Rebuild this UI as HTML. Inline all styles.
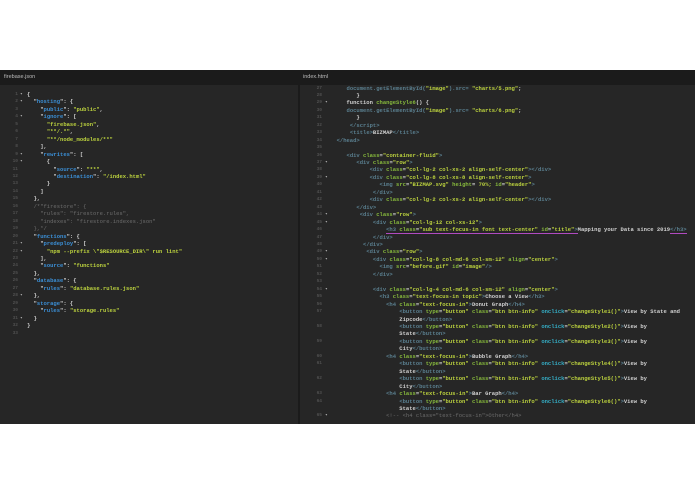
<!DOCTYPE html>
<html><head><meta charset="utf-8"><style>
html,body{margin:0;padding:0;background:#fff;width:695px;height:494px;overflow:hidden;position:relative;font-family:"Liberation Mono",monospace}
#ed{position:absolute;left:0;top:70px;width:695px;height:354px;background:#262626}
.hd{position:absolute;top:0;height:15px;background:#1b1b1b;color:#bbb;font:5.5px "Liberation Sans",sans-serif;line-height:15px;padding-left:4px;box-sizing:border-box}
.sep{position:absolute;left:298px;top:0;width:2px;height:354px;background:#1b1b1b}
pre{position:absolute;margin:0;font-family:"Liberation Mono",monospace;font-size:5.5px;line-height:7.45px;white-space:pre;color:#d0d0d0;font-weight:bold}
.n{position:absolute;margin:0;font-family:"Liberation Mono",monospace;font-size:4.5px;line-height:7.45px;color:#505050;text-align:right;white-space:pre}
.k{color:#3b8fd6}.s{color:#bcd23e}.g{color:#6c6c6c;font-weight:normal}
.t{color:#5a7f8f}.a{color:#86b83c}.c{color:#35aec6}.u{border-bottom:1px solid #b04ac0}
</style></head><body>
<div id="ed">
<div class="hd" style="left:0;width:298px">firebase.json</div>
<div class="hd" style="left:300px;width:395px;padding-left:3px">index.html</div>
<div class="sep"></div>
<pre class="n" style="left:2px;top:21px;width:16px">1
2
3
4
5
6
7
8
9
10
11
12
13
14
15
16
17
18
19
20
21
22
23
24
25
26
27
28
29
30
31
32
33</pre>
<pre class="n" style="left:20px;top:21px;color:#aaa">▾
▾

▾




▾
▾










▾
▾





▾


▾</pre>
<pre style="left:27px;top:21px">{
  "<span class="k">hosting</span>": {
    "<span class="k">public</span>": <span class="s">"public"</span>,
    "<span class="k">ignore</span>": [
      <span class="s">"firebase.json"</span>,
      <span class="s">"**/.*"</span>,
      <span class="s">"**/node_modules/**"</span>
    ],
    "<span class="k">rewrites</span>": [
      {
        "<span class="k">source</span>": <span class="s">"**"</span>,
        "<span class="k">destination</span>": <span class="s">"/index.html"</span>
      }
    ]
  },
<span class="g">  /*"firestore": {
    "rules": "firestore.rules",
    "indexes": "firestore.indexes.json"
  },*/</span>
  "<span class="k">functions</span>": {
    "<span class="k">predeploy</span>": [
      <span class="s">"npm --prefix \"$RESOURCE_DIR\" run lint"</span>
    ],
    "<span class="k">source</span>": <span class="s">"functions"</span>
  },
  "<span class="k">database</span>": {
    "<span class="k">rules</span>": <span class="s">"database.rules.json"</span>
  },
  "<span class="k">storage</span>": {
    "<span class="k">rules</span>": <span class="s">"storage.rules"</span>
  }
}
</pre>
<pre class="n" style="left:304px;top:14.5px;width:18px">27
28
29
30
31
32
33
34
35
36
37
38
39
40
41
42
43
44
45
46
47
48
49
50
51
52
53
54
55
56
57

58

59

60
61

62

63
64

65</pre>
<pre class="n" style="left:325px;top:14.5px;color:#aaa">


▾







▾

▾




▾
▾



▾
▾



▾
















▾</pre>
<pre style="left:330px;top:14.5px">     <span class="t">document.getElementById(</span><span class="s">"image"</span><span class="t">).src= </span><span class="s">"charts/5.png"</span>;
        }
     function <span class="a">changeStyle6</span>() {
     <span class="t">document.getElementById(</span><span class="s">"image"</span><span class="t">).src= </span><span class="s">"charts/6.png"</span>;
        }
      <span class="t">&lt;/script&gt;</span>
      <span class="t">&lt;title&gt;</span>BIZMAP<span class="t">&lt;/title&gt;</span>
  <span class="t">&lt;/head&gt;</span>

     <span class="t">&lt;div</span> <span class="a">class</span>=<span class="s">"container-fluid"</span><span class="t">&gt;</span>
        <span class="t">&lt;div</span> <span class="a">class</span>=<span class="s">"row"</span><span class="t">&gt;</span>
            <span class="t">&lt;div</span> <span class="a">class</span>=<span class="s">"col-lg-2 col-xs-2 align-self-center"</span><span class="t">&gt;&lt;/div&gt;</span>
            <span class="t">&lt;div</span> <span class="a">class</span>=<span class="s">"col-lg-8 col-xs-8 align-self-center"</span><span class="t">&gt;</span>
               <span class="t">&lt;img</span> <span class="a">src</span>=<span class="s">"BIZMAP.svg"</span> <span class="a">height</span>= <span class="s">70%;</span> <span class="a">id</span>=<span class="s">"header"</span><span class="t">&gt;</span>
             <span class="t">&lt;/div&gt;</span>
            <span class="t">&lt;div</span> <span class="a">class</span>=<span class="s">"col-lg-2 col-xs-2 align-self-center"</span><span class="t">&gt;&lt;/div&gt;</span>
        <span class="t">&lt;/div&gt;</span>
         <span class="t">&lt;div</span> <span class="a">class</span>=<span class="s">"row"</span><span class="t">&gt;</span>
             <span class="t">&lt;div</span> <span class="a">class</span>=<span class="s">"col-lg-12 col-xs-12"</span><span class="t">&gt;</span>
                 <span class="u"><span class="t">&lt;h3</span> <span class="a">class</span>=<span class="s">"sub text-focus-in font text-center"</span> <span class="a">id</span>=<span class="s">"title"</span><span class="t">&gt;</span></span>Mapping your Data since 2019<span class="u"><span class="t">&lt;/h3&gt;</span></span>
             <span class="t">&lt;/div&gt;</span>
          <span class="t">&lt;/div&gt;</span>
           <span class="t">&lt;div</span> <span class="a">class</span>=<span class="s">"row"</span><span class="t">&gt;</span>
             <span class="t">&lt;div</span> <span class="a">class</span>=<span class="s">"col-lg-8 col-md-6 col-sm-12"</span> <span class="a">align</span>=<span class="s">"center"</span><span class="t">&gt;</span>
               <span class="t">&lt;img</span> <span class="a">src</span>=<span class="s">"before.gif"</span> <span class="a">id</span>=<span class="s">"image"</span><span class="t">/&gt;</span>
             <span class="t">&lt;/div&gt;</span>

             <span class="t">&lt;div</span> <span class="a">class</span>=<span class="s">"col-lg-4 col-md-6 col-sm-12"</span> <span class="a">align</span>=<span class="s">"center"</span><span class="t">&gt;</span>
               <span class="t">&lt;h3</span> <span class="a">class</span>=<span class="s">"text-focus-in topic"</span><span class="t">&gt;</span>Choose a View<span class="t">&lt;/h3&gt;</span>
                 <span class="t">&lt;h4</span> <span class="a">class</span>=<span class="s">"text-focus-in"</span><span class="t">&gt;</span>Donut Graph<span class="t">&lt;/h4&gt;</span>
                     <span class="t">&lt;button</span> <span class="a">type</span>=<span class="s">"button"</span> <span class="a">class</span>=<span class="s">"btn btn-info"</span> <span class="c">onclick</span>=<span class="s">"changeStyle1()"</span><span class="t">&gt;</span>View by State and
                     Zipcode<span class="t">&lt;/button&gt;</span>
                     <span class="t">&lt;button</span> <span class="a">type</span>=<span class="s">"button"</span> <span class="a">class</span>=<span class="s">"btn btn-info"</span> <span class="c">onclick</span>=<span class="s">"changeStyle2()"</span><span class="t">&gt;</span>View by
                     State<span class="t">&lt;/button&gt;</span>
                     <span class="t">&lt;button</span> <span class="a">type</span>=<span class="s">"button"</span> <span class="a">class</span>=<span class="s">"btn btn-info"</span> <span class="c">onclick</span>=<span class="s">"changeStyle3()"</span><span class="t">&gt;</span>View by
                     City<span class="t">&lt;/button&gt;</span>
                 <span class="t">&lt;h4</span> <span class="a">class</span>=<span class="s">"text-focus-in"</span><span class="t">&gt;</span>Bubble Graph<span class="t">&lt;/h4&gt;</span>
                     <span class="t">&lt;button</span> <span class="a">type</span>=<span class="s">"button"</span> <span class="a">class</span>=<span class="s">"btn btn-info"</span> <span class="c">onclick</span>=<span class="s">"changeStyle4()"</span><span class="t">&gt;</span>View by
                     State<span class="t">&lt;/button&gt;</span>
                     <span class="t">&lt;button</span> <span class="a">type</span>=<span class="s">"button"</span> <span class="a">class</span>=<span class="s">"btn btn-info"</span> <span class="c">onclick</span>=<span class="s">"changeStyle5()"</span><span class="t">&gt;</span>View by
                     City<span class="t">&lt;/button&gt;</span>
                 <span class="t">&lt;h4</span> <span class="a">class</span>=<span class="s">"text-focus-in"</span><span class="t">&gt;</span>Bar Graph<span class="t">&lt;/h4&gt;</span>
                     <span class="t">&lt;button</span> <span class="a">type</span>=<span class="s">"button"</span> <span class="a">class</span>=<span class="s">"btn btn-info"</span> <span class="c">onclick</span>=<span class="s">"changeStyle6()"</span><span class="t">&gt;</span>View by
                     State<span class="t">&lt;/button&gt;</span>
<span class="g">                 &lt;!-- &lt;h4 class="text-focus-in"&gt;Other&lt;/h4&gt;</span></pre>
</div>
</body></html>
